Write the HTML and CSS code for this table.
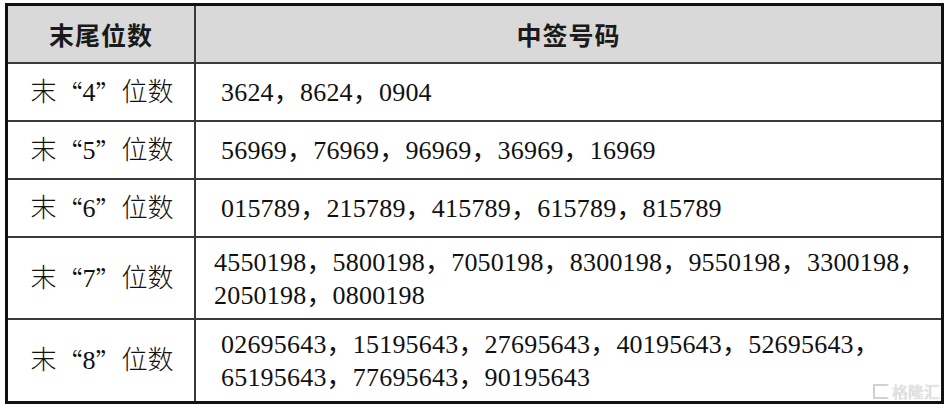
FILE: index.html
```html
<!DOCTYPE html>
<html lang="zh-CN">
<head>
<meta charset="utf-8">
<link rel="stylesheet" href="styles.css">
</head>
<body>
<div class="table">
  <div class="cell head">末尾位数</div>
  <div class="cell head">中签号码</div>

  <div class="cell label">末<span class="q">“</span>4<span class="q">”</span>位数</div>
  <div class="cell nums">3624，8624，0904</div>

  <div class="cell label">末<span class="q">“</span>5<span class="q">”</span>位数</div>
  <div class="cell nums">56969，76969，96969，36969，16969</div>

  <div class="cell label">末<span class="q">“</span>6<span class="q">”</span>位数</div>
  <div class="cell nums">015789，215789，415789，615789，815789</div>

  <div class="cell label">末<span class="q">“</span>7<span class="q">”</span>位数</div>
  <div class="cell nums tight">4550198，5800198，7050198，8300198，9550198，3300198，2050198，0800198</div>

  <div class="cell label">末<span class="q">“</span>8<span class="q">”</span>位数</div>
  <div class="cell nums last">02695643，15195643，27695643，40195643，52695643，65195643，77695643，90195643
    <div class="watermark"><span class="logo"></span>格隆汇</div>
  </div>
</div>
</body>
</html>
```

FILE: styles.css
```css
html, body {
  margin: 0;
  padding: 0;
  background: #ffffff;
}

body {
  padding: 3px 0 0 5px;
}

.table {
  width: 939px;
  box-sizing: border-box;
  border: 3px solid #111111;
  background: #3a3a3a;
  display: grid;
  grid-template-columns: 186px 1fr;
  grid-template-rows: 56px 56px 56px 56px 80px 81px;
  gap: 2px;
}

.cell {
  background: #ffffff;
  display: flex;
  align-items: center;
  font-family: "Liberation Serif", "Noto Sans CJK SC", serif;
  font-size: 26px;
  color: #111111;
  line-height: 33px;
}

.head {
  background: #d9d9d9;
  justify-content: center;
  font-family: "Noto Sans CJK SC", sans-serif;
  font-weight: 700;
  font-size: 25px;
  color: #1a1a1a;
  letter-spacing: 1px;
}

.label {
  justify-content: center;
  font-weight: 300;
  padding-left: 2px;
  white-space: pre;
}

.q {
  font-family: "Noto Sans CJK SC", sans-serif;
  font-weight: 300;
}

.nums {
  padding-left: 25px;
  padding-right: 10px;
  padding-top: 1px;
  letter-spacing: 0.2px;
}

.nums.tight {
  padding-left: 18px;
}

.nums.last {
  position: relative;
}

.watermark {
  position: absolute;
  right: 1px;
  bottom: 0;
  display: flex;
  align-items: center;
  gap: 3px;
  font-family: "Noto Sans CJK SC", sans-serif;
  font-size: 16px;
  line-height: 20px;
  color: #e4e4e4;
  text-shadow: 0 0 1px #b8b8b8;
  letter-spacing: 0;
}

.logo {
  width: 16px;
  height: 15px;
  border: 2px solid #d0d0d0;
  border-right-color: transparent;
  box-sizing: border-box;
}
```
